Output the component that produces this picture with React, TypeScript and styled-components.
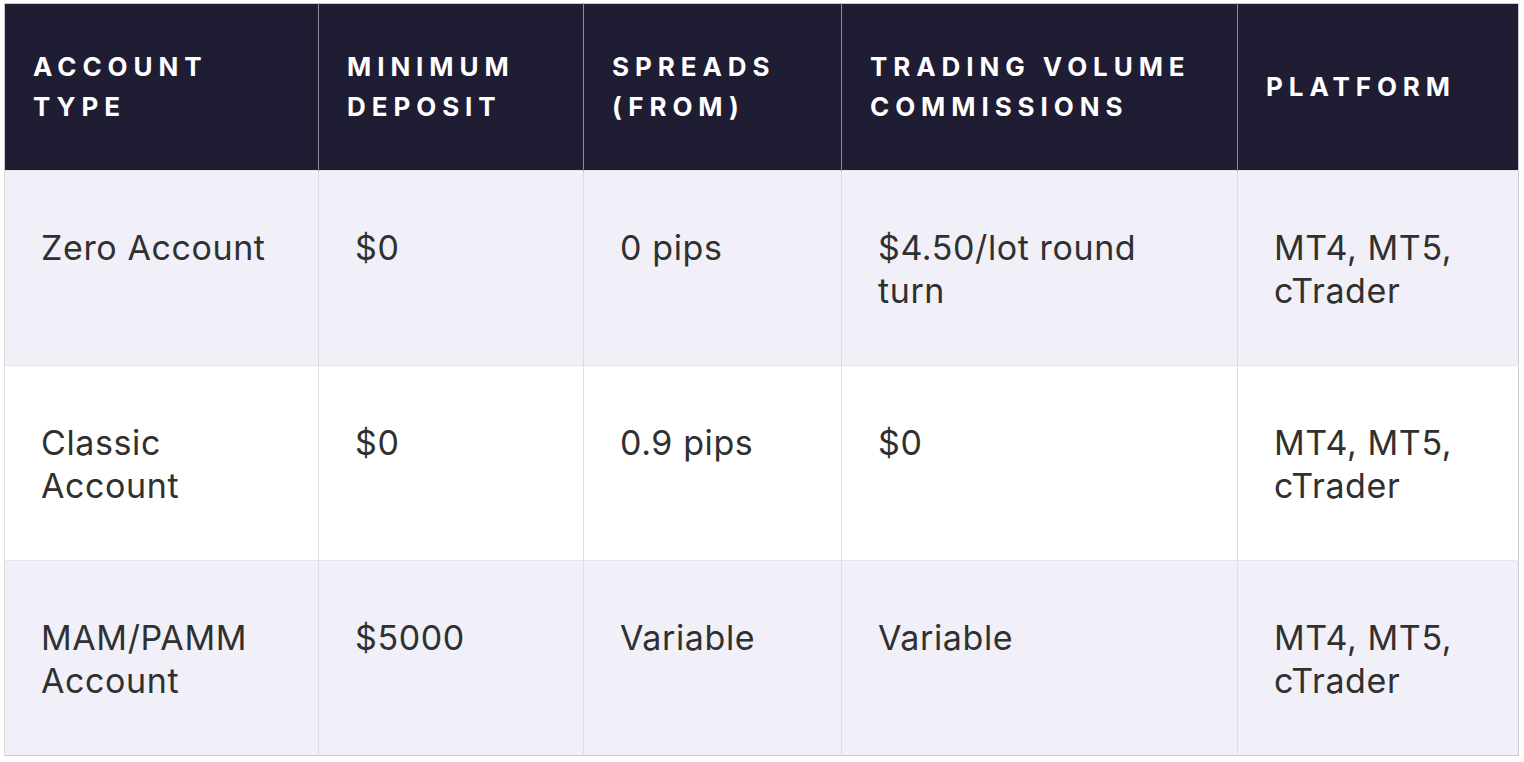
import React from "react";
import styled, { createGlobalStyle } from "styled-components";

const GlobalStyle = createGlobalStyle`
  html, body { margin: 0; padding: 0; background: #ffffff; }
  body { font-family: Inter, "Noto Sans", "Liberation Sans", sans-serif; }
`;

const Page = styled.div`
  padding: 3px 6px 6px 4px;
`;

const Table = styled.table`
  width: 1514px;
  table-layout: fixed;
  border-collapse: collapse;
  border: 1px solid #c9c9cf;
`;

const HeadRow = styled.tr`
  background: #1f1d33;
  height: 167px;
`;

const HeadCell = styled.th`
  padding: 0 24px 0 28px;
  text-align: left;
  vertical-align: middle;
  color: #ffffff;
  font-family: Inter, "Liberation Sans", sans-serif;
  font-weight: 700;
  font-size: 26px;
  line-height: 40px;
  letter-spacing: 0.228em;
  text-transform: uppercase;
  border-left: 1px solid #8c8b98;
  &:first-child { border-left: 1px solid #c9c9cf; }
`;

const BodyRow = styled.tr<{ $shade: boolean }>`
  background: ${(p) => (p.$shade ? "#f1f0f9" : "#ffffff")};
  height: 195px;
  border-top: 1px solid #e4e4ea;
`;

const Cell = styled.td`
  padding: 55px 34px 0 36px;
  vertical-align: top;
  color: #303030;
  font-family: Inter, "Liberation Sans", sans-serif;
  font-weight: 400;
  font-size: 34px;
  line-height: 43px;
  letter-spacing: 0.6px;
  border-left: 1px solid #dcdce2;
`;

const columns = [314, 265, 258, 396, 281];

const headers = [
  "Account Type",
  "Minimum Deposit",
  "Spreads (from)",
  "Trading Volume Commissions",
  "Platform",
];

const rows = [
  ["Zero Account", "$0", "0 pips", "$4.50/lot round turn", "MT4, MT5, cTrader"],
  ["Classic Account", "$0", "0.9 pips", "$0", "MT4, MT5, cTrader"],
  ["MAM/PAMM Account", "$5000", "Variable", "Variable", "MT4, MT5, cTrader"],
];

export default function App() {
  return (
    <>
      <GlobalStyle />
      <Page>
        <Table>
          <colgroup>
            {columns.map((w, i) => (
              <col key={i} style={{ width: w }} />
            ))}
          </colgroup>
          <thead>
            <HeadRow>
              {headers.map((h) => (
                <HeadCell key={h}>{h}</HeadCell>
              ))}
            </HeadRow>
          </thead>
          <tbody>
            {rows.map((r, i) => (
              <BodyRow key={i} $shade={i % 2 === 0}>
                {r.map((c, j) => (
                  <Cell key={j}>{c}</Cell>
                ))}
              </BodyRow>
            ))}
          </tbody>
        </Table>
      </Page>
    </>
  );
}
